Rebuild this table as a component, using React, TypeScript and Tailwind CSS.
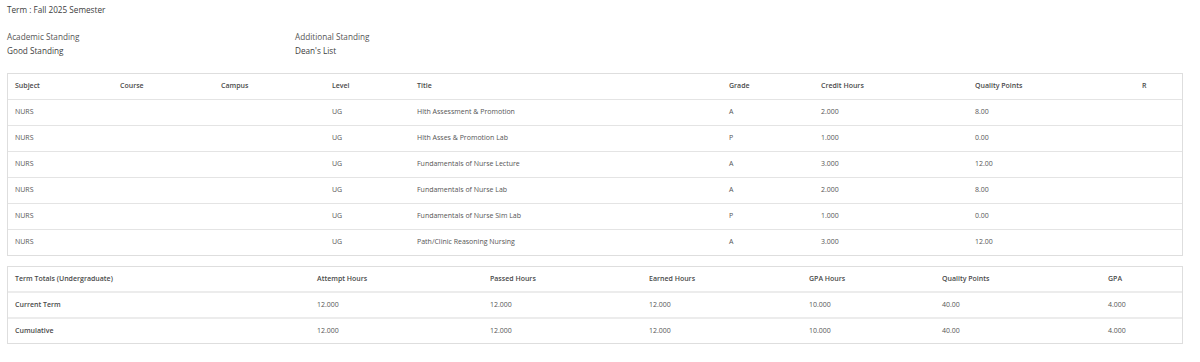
const courses = [
    { subject: "NURS", level: "UG", title: "Hlth Assessment & Promotion", grade: "A", credit: "2.000", points: "8.00" },
    { subject: "NURS", level: "UG", title: "Hlth Asses & Promotion Lab", grade: "P", credit: "1.000", points: "0.00" },
    { subject: "NURS", level: "UG", title: "Fundamentals of Nurse Lecture", grade: "A", credit: "3.000", points: "12.00" },
    { subject: "NURS", level: "UG", title: "Fundamentals of Nurse Lab", grade: "A", credit: "2.000", points: "8.00" },
    { subject: "NURS", level: "UG", title: "Fundamentals of Nurse Sim Lab", grade: "P", credit: "1.000", points: "0.00" },
    { subject: "NURS", level: "UG", title: "Path/Clinic Reasoning Nursing", grade: "A", credit: "3.000", points: "12.00" },
];

const totals = [
    { label: "Current Term", attempt: "12.000", passed: "12.000", earned: "12.000", gpaHours: "10.000", points: "40.00", gpa: "4.000" },
    { label: "Cumulative", attempt: "12.000", passed: "12.000", earned: "12.000", gpaHours: "10.000", points: "40.00", gpa: "4.000" },
];

const courseCols = "grid grid-cols-[105px_101px_111px_85px_312px_92px_154px_167px_49px]";
const totalCols = "grid grid-cols-[302px_173px_159px_160px_133px_166px_83px]";

export default function App() {
    return (
        <div className="w-[1200px] h-[362px] bg-white text-[#3d3d3d] px-[7px] pt-[4px]" style={{ fontFamily: '"Open Sans", "Liberation Sans", sans-serif' }}>
            <p className="text-[8.2px] leading-[12px]">Term : Fall 2025 Semester</p>

            <div className="flex mt-[14px] text-[8.2px] leading-[14px]">
                <div className="w-[288px]">
                    <p className="text-[#555]">Academic Standing</p>
                    <p>Good Standing</p>
                </div>
                <div>
                    <p className="text-[#555]">Additional Standing</p>
                    <p>Dean's List</p>
                </div>
            </div>

            <div className="mt-[15px] w-[1176px] border border-[#dedede] text-[7px]">
                <div className={`${courseCols} h-[26px] items-center font-semibold text-[#4a4a4a] border-b border-[#e4e4e4]`}>
                    <div className="px-[7px]">Subject</div>
                    <div className="px-[7px]">Course</div>
                    <div className="px-[7px]">Campus</div>
                    <div className="px-[7px]">Level</div>
                    <div className="px-[7px]">Title</div>
                    <div className="px-[7px]">Grade</div>
                    <div className="px-[7px]">Credit Hours</div>
                    <div className="px-[7px]">Quality Points</div>
                    <div className="px-[7px]">R</div>
                </div>
                {courses.map((c, i) => (
                    <div key={i} className={`${courseCols} items-center text-[#555] ${i < courses.length - 1 ? "h-[26px] border-b border-[#e4e4e4]" : "h-[25px]"}`}>
                        <div className="px-[7px]">{c.subject}</div>
                        <div className="px-[7px]"></div>
                        <div className="px-[7px]"></div>
                        <div className="px-[7px]">{c.level}</div>
                        <div className="px-[7px]">{c.title}</div>
                        <div className="px-[7px]">{c.grade}</div>
                        <div className="px-[7px]">{c.credit}</div>
                        <div className="px-[7px]">{c.points}</div>
                        <div className="px-[7px]"></div>
                    </div>
                ))}
            </div>

            <div className="mt-[10px] w-[1176px] border border-[#dedede] text-[7px]">
                <div className={`${totalCols} h-[26px] items-center font-semibold text-[#4a4a4a] border-b-2 border-[#ececec]`}>
                    <div className="px-[7px]">Term Totals (Undergraduate)</div>
                    <div className="px-[7px]">Attempt Hours</div>
                    <div className="px-[7px]">Passed Hours</div>
                    <div className="px-[7px]">Earned Hours</div>
                    <div className="px-[7px]">GPA Hours</div>
                    <div className="px-[7px]">Quality Points</div>
                    <div className="px-[7px]">GPA</div>
                </div>
                {totals.map((t, i) => (
                    <div key={t.label} className={`${totalCols} items-center text-[#555] ${i < totals.length - 1 ? "h-[26px] border-b-2 border-[#ececec]" : "h-[24px]"}`}>
                        <div className="px-[7px] font-semibold text-[#4a4a4a]">{t.label}</div>
                        <div className="px-[7px]">{t.attempt}</div>
                        <div className="px-[7px]">{t.passed}</div>
                        <div className="px-[7px]">{t.earned}</div>
                        <div className="px-[7px]">{t.gpaHours}</div>
                        <div className="px-[7px]">{t.points}</div>
                        <div className="px-[7px]">{t.gpa}</div>
                    </div>
                ))}
            </div>
        </div>
    );
}
